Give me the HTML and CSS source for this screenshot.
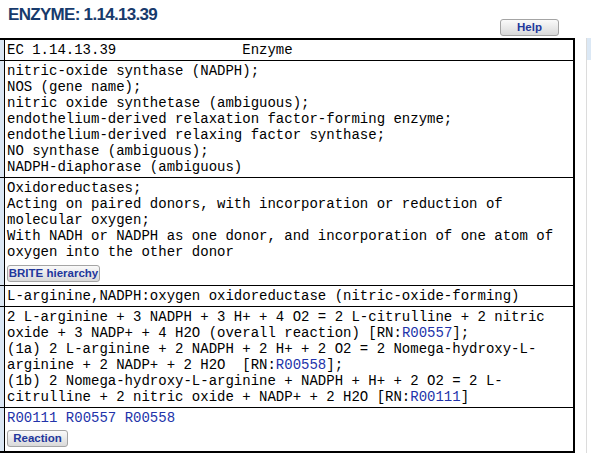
FILE: index.html
```html
<!DOCTYPE html>
<html>
<head>
<meta charset="utf-8">
<link rel="stylesheet" href="styles.css">
</head>
<body>
<div class="page">
  <div class="main">
    <div class="header">
      <h1 class="title">ENZYME: 1.14.13.39</h1>
      <button class="btn btn-help">Help</button>
    </div>
    <div class="tbl">
      <div class="row">
        <div class="lab"></div>
        <div class="cell pre">EC 1.14.13.39               Enzyme</div>
      </div>
      <div class="row">
        <div class="lab"></div>
        <div class="cell">nitric-oxide synthase (NADPH);<br>NOS (gene name);<br>nitric oxide synthetase (ambiguous);<br>endothelium-derived relaxation factor-forming enzyme;<br>endothelium-derived relaxing factor synthase;<br>NO synthase (ambiguous);<br>NADPH-diaphorase (ambiguous)</div>
      </div>
      <div class="row">
        <div class="lab"></div>
        <div class="cell with-btn">
          <div>Oxidoreductases;<br>Acting on paired donors, with incorporation or reduction of molecular oxygen;<br>With NADH or NADPH as one donor, and incorporation of one atom of oxygen into the other donor</div>
          <button class="btn btn-brite">BRITE hierarchy</button>
        </div>
      </div>
      <div class="row">
        <div class="lab"></div>
        <div class="cell">L-arginine,NADPH:oxygen oxidoreductase (nitric-oxide-forming)</div>
      </div>
      <div class="row">
        <div class="lab"></div>
        <div class="cell">2 L-arginine + 3 NADPH + 3 H+ + 4 O2 = 2 L-citrulline + 2 nitric oxide + 3 NADP+ + 4 H2O (overall reaction) [RN:<a href="#">R00557</a>];<br>(1a) 2 L-arginine + 2 NADPH + 2 H+ + 2 O2 = 2 Nomega-hydroxy-L-arginine + 2 NADP+ + 2 H2O&nbsp; [RN:<a href="#">R00558</a>];<br>(1b) 2 Nomega-hydroxy-L-arginine + NADPH + H+ + 2 O2 = 2 L-citrulline + 2 nitric oxide + NADP+ + 2 H2O [RN:<a href="#">R00111</a>]</div>
      </div>
      <div class="row">
        <div class="lab"></div>
        <div class="cell with-btn last">
          <div><a href="#">R00111</a> <a href="#">R00557</a> <a href="#">R00558</a></div>
          <button class="btn btn-reaction">Reaction</button>
        </div>
      </div>
    </div>
  </div>
  <div class="side">
    <div class="side-head"></div>
  </div>
</div>
</body>
</html>
```
FILE: styles.css
```css
html, body {
  margin: 0;
  padding: 0;
  background: #fff;
}

.page {
  display: flex;
  align-items: flex-start;
}

.main {
  width: 575px;
  flex: none;
}

.header {
  height: 38px;
  display: flex;
  justify-content: space-between;
  align-items: flex-end;
}

.title {
  align-self: flex-start;
  margin: 0;
  padding: 6px 0 0 8px;
  font-family: "Liberation Sans", Arial, sans-serif;
  font-weight: bold;
  font-size: 17px;
  line-height: 18px;
  letter-spacing: -0.7px;
  color: #173a6c;
}

.btn {
  display: block;
  height: 17px;
  padding: 0;
  margin: 0;
  border: 1px solid #a4a4a4;
  border-radius: 3px;
  background: linear-gradient(#fafafa, #d9d9d9);
  font-family: "Liberation Sans", Arial, sans-serif;
  font-weight: bold;
  font-size: 11.5px;
  line-height: 15px;
  color: #22379c;
  text-align: center;
  white-space: nowrap;
}

.btn-help {
  width: 59px;
  margin: 0 16px 2px 0;
}

.btn-brite {
  width: 93px;
  margin-top: 5px;
}

.btn-reaction {
  width: 61px;
  margin-top: 4px;
}

.tbl {
  border-top: 2px solid #000;
  border-right: 2px solid #000;
  border-bottom: 2px solid #000;
}

.row {
  display: flex;
  border-top: 1px solid #000;
}

.row:first-child {
  border-top: none;
}

.lab {
  width: 4px;
  flex: none;
  background: #dbe7f4;
  border-right: 1px solid #000;
}

.cell {
  flex: 1;
  min-width: 0;
  padding: 2px 2px;
  font-family: "Liberation Mono", "Courier New", monospace;
  font-size: 14px;
  line-height: 16px;
  color: #000;
}

.cell.pre {
  white-space: pre;
}

.cell.with-btn {
  padding-bottom: 3px;
}

.cell.last {
  padding-bottom: 4px;
}

.cell a {
  color: #2233aa;
  text-decoration: none;
}

.side {
  margin-top: 38px;
  margin-left: 11px;
  width: 6px;
  height: 415px;
  border-left: 1px solid #dcdcdc;
}

.side-head {
  height: 22px;
  background: #dbe8f5;
}
```
